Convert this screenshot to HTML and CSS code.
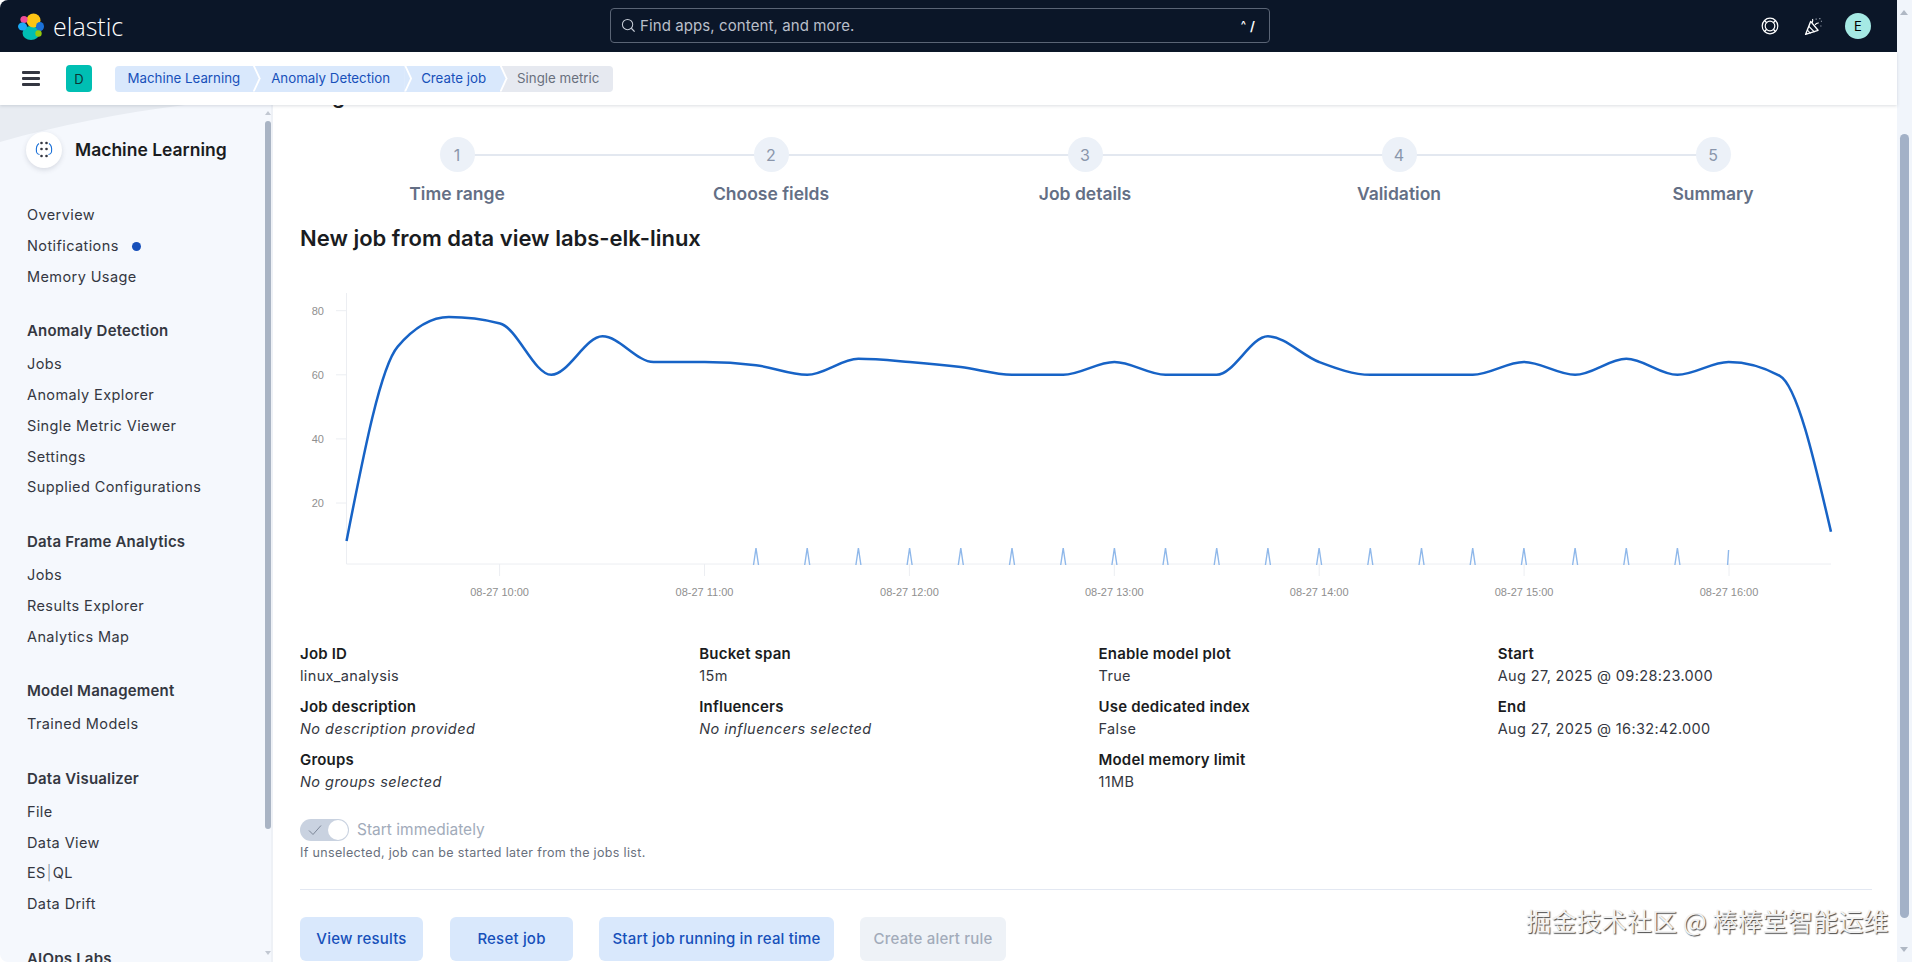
FILE: index.html
```html
<!DOCTYPE html>
<html lang="en">
<head>
<meta charset="utf-8">
<title>Create job - Single metric</title>
<link rel="stylesheet" href="styles.css">
</head>
<body>
<div class="app">
  <div class="column">
    <header class="topbar">
      <div class="brand">
        <svg class="brand-logo" viewBox="0 0 26 27" width="26" height="27">
          <ellipse cx="13" cy="20" rx="8.500" ry="7" fill="#00bfb3"/>
          <circle cx="15.500" cy="7.500" r="7" fill="#fec514"/>
          <circle cx="6" cy="6.500" r="3.600" fill="#f04e98"/>
          <ellipse cx="4.500" cy="13.500" rx="4.500" ry="4" fill="#1ba9f5"/>
          <ellipse cx="22" cy="13.500" rx="4" ry="4.500" fill="#1b71d8"/>
          <circle cx="20.500" cy="20.500" r="3.200" fill="#93c90e"/>
        </svg>
        <span class="brand-name">elastic</span>
      </div>
      <div class="search">
        <svg class="search-icon" viewBox="0 0 16 16" width="15" height="15">
          <circle cx="7" cy="7" r="5.500" fill="none" stroke="#c6ccd6" stroke-width="1.100"/>
          <path d="M11 11l3.500 3.500" stroke="#c6ccd6" stroke-width="1.400"/>
        </svg>
        <span class="search-text">Find apps, content, and more.</span>
        <span class="search-key"><span class="search-caret">^</span>/</span>
      </div>
      <div class="top-actions">
        <svg viewBox="0 0 18 18" width="18" height="18" class="top-icon">
          <circle cx="9" cy="9" r="7.800" fill="none" stroke="#fff" stroke-width="1.200"/>
          <circle cx="9" cy="9" r="4.800" fill="none" stroke="#fff" stroke-width="1.200"/>
          <path d="M3.500 3.500l2.200 2.200M14.500 3.500l-2.200 2.200M3.500 14.500l2.200-2.200M14.500 14.500l-2.200-2.200" stroke="#fff" stroke-width="1.400"/>
        </svg>
        <svg viewBox="0 0 18 18" width="19" height="19" class="top-icon">
          <path d="M1.500 16.500L6.300 4.200l7 8.400z" fill="none" stroke="#fff" stroke-width="1.300" stroke-linejoin="round"/>
          <path d="M4.600 8.800l5.400 5.600M3.200 12.500l3 3M7.500 5.500c1-1.500 1-2.500.6-3.600M10.500 7.500c1-1.600 2.200-2 3.500-1.800" fill="none" stroke="#fff" stroke-width="1.100"/>
          <path d="M11 2h1M14.500 1.500h1M16 4h1M15.500 8.500h1" stroke="#aab2bf" stroke-width="1.100"/>
        </svg>
        <span class="user-avatar">E</span>
      </div>
    </header>

    <div class="subbar">
      <div class="burger"><span></span><span></span><span></span></div>
      <span class="space-badge">D</span>
      <nav class="crumbs">
        <span class="crumb crumb-first">Machine Learning</span>
        <span class="crumb crumb-second">Anomaly Detection</span>
        <span class="crumb crumb-third">Create job</span>
        <span class="crumb crumb-last">Single metric</span>
      </nav>
    </div>

    <div class="workspace">
      <aside class="sidebar">
        <svg class="swoosh" viewBox="0 0 265 40" width="265" height="40" preserveAspectRatio="none">
          <path d="M0 0H185C120 8 60 20 0 37z" fill="#e8ecf2"/>
        </svg>
        <div class="side-scroll">
          <div class="side-arrow side-arrow-up"></div>
          <div class="side-thumb"></div>
          <div class="side-arrow side-arrow-down"></div>
        </div>
        <div class="side-title">
          <span class="side-logo">
            <svg viewBox="0 0 20 20" width="20" height="20">
              <g fill="#343741">
                <circle cx="7.500" cy="3" r="1.300"/><circle cx="12.500" cy="3" r="1.300"/>
                <circle cx="7.500" cy="9" r="1.300"/><circle cx="12.500" cy="9" r="1.300"/>
                <circle cx="7.500" cy="16" r="1.300"/><circle cx="12.500" cy="16" r="1.300"/>
              </g>
              <path d="M5 3.500C2.500 5 2 8 2.500 12c.3 1.500 1.500 2.300 3 2.500M15 3.500c2.500 1.500 3 4.500 2.500 8.500-.3 1.500-1.500 2.300-3 2.500" fill="none" stroke="#1b71d8" stroke-width="1.100"/>
            </svg>
          </span>
          <span class="side-name">Machine Learning</span>
        </div>
        <div class="side-nav">
          <div class="side-group">
            <a class="side-link">Overview</a>
            <a class="side-link">Notifications<span class="notify-dot"></span></a>
            <a class="side-link">Memory Usage</a>
          </div>
          <div class="side-group">
            <h3 class="side-head">Anomaly Detection</h3>
            <a class="side-link">Jobs</a>
            <a class="side-link">Anomaly Explorer</a>
            <a class="side-link">Single Metric Viewer</a>
            <a class="side-link">Settings</a>
            <a class="side-link">Supplied Configurations</a>
          </div>
          <div class="side-group">
            <h3 class="side-head">Data Frame Analytics</h3>
            <a class="side-link">Jobs</a>
            <a class="side-link">Results Explorer</a>
            <a class="side-link">Analytics Map</a>
          </div>
          <div class="side-group">
            <h3 class="side-head">Model Management</h3>
            <a class="side-link">Trained Models</a>
          </div>
          <div class="side-group">
            <h3 class="side-head">Data Visualizer</h3>
            <a class="side-link">File</a>
            <a class="side-link">Data View</a>
            <a class="side-link">ES<span class="pipe">|</span>QL</a>
            <a class="side-link">Data Drift</a>
          </div>
          <div class="side-group">
            <h3 class="side-head">AIOps Labs</h3>
          </div>
        </div>
      </aside>

      <main class="content">
        <h1 class="page-title">Single metric</h1>
        <ol class="stepper">
          <li class="step"><span class="step-num">1</span><span class="step-title">Time range</span></li>
          <li class="step"><span class="step-num">2</span><span class="step-title">Choose fields</span></li>
          <li class="step"><span class="step-num">3</span><span class="step-title">Job details</span></li>
          <li class="step"><span class="step-num">4</span><span class="step-title">Validation</span></li>
          <li class="step"><span class="step-num">5</span><span class="step-title">Summary</span></li>
        </ol>
        <h2 class="job-heading">New job from data view labs-elk-linux</h2>

        <svg class="chart" viewBox="0 0 1572 320" width="1572" height="320">
          <g class="grid-lines">
            <path d="M46.500 13V284M36 30.700H46.500M36 94.800H46.500M36 158.900H46.500M36 223H46.500"/>
            <path d="M46.500 284H1531"/>
            <path d="M199.600 284V296M404.500 284V296M609.400 284V296M814.300 284V296M1019.200 284V296M1224.100 284V296M1429 284V296"/>
          </g>
          <g class="y-labels">
            <text x="24" y="34.500">80</text>
            <text x="24" y="98.500">60</text>
            <text x="24" y="163">40</text>
            <text x="24" y="227">20</text>
          </g>
          <g class="x-labels">
            <text x="199.600" y="316">08-27 10:00</text>
            <text x="404.500" y="316">08-27 11:00</text>
            <text x="609.400" y="316">08-27 12:00</text>
            <text x="814.300" y="316">08-27 13:00</text>
            <text x="1019.200" y="316">08-27 14:00</text>
            <text x="1224.100" y="316">08-27 15:00</text>
            <text x="1429" y="316">08-27 16:00</text>
          </g>
          <path class="spikes" d="M453.500 285L456 268L458.500 285M504.700 285L507.200 268L509.700 285M555.900 285L558.400 268L560.900 285M607.100 285L609.600 268L612.100 285M658.300 285L660.800 268L663.300 285M709.500 285L712 268L714.500 285M760.700 285L763.200 268L765.700 285M811.900 285L814.400 268L816.900 285M863 285L865.500 268L868 285M914.200 285L916.700 268L919.200 285M965.400 285L967.900 268L970.400 285M1016.600 285L1019.100 268L1021.600 285M1067.800 285L1070.300 268L1072.800 285M1119 285L1121.500 268L1124 285M1170.200 285L1172.700 268L1175.200 285M1221.400 285L1223.900 268L1226.400 285M1272.600 285L1275.100 268L1277.600 285M1323.800 285L1326.300 268L1328.800 285M1374.900 285L1377.400 268L1379.900 285M1427.600 285L1428.600 270"/>
          <path class="series" d="M46.500 261.100C63.600 173.700 80.600 86.300 97.700 66.600C114.800 46.900 131.800 37.100 148.900 37.100C166 37.100 183 39.200 200.100 43.500C217.200 47.800 234.200 94.800 251.300 94.800C268.400 94.800 285.400 56.300 302.500 56.300C319.600 56.300 336.500 82 353.600 82C370.700 82 387.700 82 404.800 82C421.900 82 438.900 83.100 456 85.200C473.100 87.300 490.100 94.800 507.200 94.800C524.300 94.800 541.300 78.800 558.400 78.800C575.500 78.800 592.500 80.600 609.600 82C626.700 83.400 643.700 85 660.800 87.100C677.900 89.200 694.900 94.800 712 94.800L763.200 94.800C780.300 94.800 797.300 82 814.400 82C831.500 82 848.400 94.800 865.500 94.800L916.700 94.800C933.800 94.800 950.800 56.300 967.900 56.300C985 56.300 1002 75.600 1019.100 82C1036.200 88.400 1053.200 94.800 1070.300 94.800L1172.700 94.800C1189.800 94.800 1206.800 82 1223.900 82C1241 82 1258 94.800 1275.100 94.800C1292.200 94.800 1309.200 78.800 1326.300 78.800C1343.400 78.800 1360.300 94.800 1377.400 94.800C1394.500 94.800 1411.500 82 1428.600 82C1445.700 82 1462.700 86.600 1479.800 95.800C1496.900 105 1513.900 178.400 1531 251.800"/>
        </svg>

        <div class="details">
          <div class="detail-col">
            <dl class="field"><dt>Job ID</dt><dd>linux_analysis</dd></dl>
            <dl class="field"><dt>Job description</dt><dd class="empty">No description provided</dd></dl>
            <dl class="field"><dt>Groups</dt><dd class="empty">No groups selected</dd></dl>
          </div>
          <div class="detail-col">
            <dl class="field"><dt>Bucket span</dt><dd>15m</dd></dl>
            <dl class="field"><dt>Influencers</dt><dd class="empty">No influencers selected</dd></dl>
          </div>
          <div class="detail-col">
            <dl class="field"><dt>Enable model plot</dt><dd>True</dd></dl>
            <dl class="field"><dt>Use dedicated index</dt><dd>False</dd></dl>
            <dl class="field"><dt>Model memory limit</dt><dd>11MB</dd></dl>
          </div>
          <div class="detail-col">
            <dl class="field"><dt>Start</dt><dd>Aug 27, 2025 @ 09:28:23.000</dd></dl>
            <dl class="field"><dt>End</dt><dd>Aug 27, 2025 @ 16:32:42.000</dd></dl>
          </div>
        </div>

        <div class="switch-row">
          <span class="switch">
            <svg viewBox="0 0 16 16" width="16" height="16" class="switch-check"><path d="M2 8.500l4 4L14 3.500" fill="none" stroke="#7d8798" stroke-width="1"/></svg>
            <span class="switch-thumb"></span>
          </span>
          <span class="switch-label">Start immediately</span>
        </div>
        <p class="help">If unselected, job can be started later from the jobs list.</p>
        <hr class="rule">
        <div class="actions">
          <button class="btn btn-results">View results</button>
          <button class="btn btn-reset">Reset job</button>
          <button class="btn btn-realtime">Start job running in real time</button>
          <button class="btn btn-alert">Create alert rule</button>
        </div>
      </main>
    </div>
  </div>

  <div class="page-scroll">
    <div class="page-arrow page-arrow-up"></div>
    <div class="page-thumb"></div>
    <div class="page-arrow page-arrow-down"></div>
  </div>
</div>
<div class="watermark">掘金技术社区 @ 棒棒堂智能运维</div>
</body>
</html>
```

FILE: styles.css
```css
* { box-sizing: border-box; }
html, body { margin: 0; height: 100%; overflow: hidden; }
body { font-family: Inter, "Noto Sans", sans-serif; background: #fff; color: #343741; position: relative; }
h1, h2, h3, p, ol, dl, dd { margin: 0; padding: 0; }

.app { display: flex; height: 962px; }
.column { flex: 1; min-width: 0; display: flex; flex-direction: column; }

.topbar { height: 52px; flex: none; background: #0b1628; display: flex; align-items: center; border-top-left-radius: 8px; }
.brand { width: 610px; flex: none; display: flex; align-items: center; padding-left: 18px; gap: 9px; }
.brand-logo { flex: none; }
.brand-name { color: #fff; font-family: "Open Sans", sans-serif; font-size: 25px; font-weight: 300; line-height: 30px; }
.search { width: 660px; height: 35px; flex: none; margin-top: -1px; border: 1px solid #5a6475; border-radius: 4px; display: flex; align-items: center; padding: 0 14px 0 10px; gap: 4px; }
.search-icon { flex: none; }
.search-text { flex: 1; color: #b9bfca; font-size: 15px; letter-spacing: .1px; }
.search-key { color: #fff; font-size: 13px; font-weight: 600; display: flex; gap: 4px; align-items: center; }
.search-caret { font-size: 11px; position: relative; top: -1px; }
.top-actions { flex: 1; display: flex; align-items: center; padding-left: 491px; }
.top-icon { flex: none; margin-right: 25px; }
.top-actions .top-icon:nth-child(2) { margin-right: 22px; }
.user-avatar { width: 26px; height: 26px; border-radius: 50%; background: #a5e9e4; color: #000; font-size: 13px; display: flex; align-items: center; justify-content: center; }

.subbar { height: 53px; flex: none; background: #fff; display: flex; align-items: center; padding-left: 22px; box-shadow: 0 1px 3px rgba(60, 70, 90, .18); position: relative; z-index: 2; }
.burger { width: 18px; display: flex; flex-direction: column; gap: 3.500px; flex: none; }
.burger span { height: 2.500px; background: #343741; border-radius: 1px; }
.space-badge { width: 26px; height: 27px; margin-left: 26px; background: #00bfb3; border-radius: 4px; color: #0c3533; font-size: 13px; display: flex; align-items: center; justify-content: center; flex: none; }
.crumbs { display: flex; margin-left: 22.500px; height: 26px; }
.crumb { position: relative; height: 26px; display: flex; align-items: center; padding-bottom: 1px; font-size: 13.300px; background: #d9e8fc; color: #1750ba; white-space: nowrap; }
.crumb::before { content: ""; position: absolute; top: 0; right: -8px; width: 8px; height: 100%; background: #fff; clip-path: polygon(0 0, 2px 0, 100% 50%, 2px 100%, 0 100%); z-index: 1; }
.crumb::after { content: ""; position: absolute; top: 0; right: -6px; width: 6px; height: 100%; background: #d9e8fc; clip-path: polygon(0 0, 100% 50%, 0 100%); z-index: 2; }
.crumb-first { padding-left: 13px; padding-right: 12.500px; border-radius: 4px 0 0 4px; }
.crumb-second { padding-left: 18.500px; padding-right: 14px; }
.crumb-third { padding-left: 17px; padding-right: 13.500px; }
.crumb-last { background: #e6e9f0; color: #69707d; padding-left: 17.500px; padding-right: 14px; border-radius: 0 4px 4px 0; }
.crumb-last::before, .crumb-last::after { display: none; }

.workspace { flex: 1; min-height: 0; display: flex; }
.sidebar { width: 273px; flex: none; background: #f5f8fd; position: relative; overflow: hidden; border-bottom-left-radius: 8px; box-shadow: inset -2px 0 0 #eef1f6; }
.swoosh { position: absolute; left: 0; top: 0; }
.side-scroll { position: absolute; right: 2px; top: 0; bottom: 0; width: 6px; }
.side-thumb { position: absolute; left: 0; right: 0; top: 16px; height: 708px; background: #a9b4c4; border-radius: 3px; }
.side-arrow { position: absolute; left: 0; border-left: 3px solid transparent; border-right: 3px solid transparent; }
.side-arrow-up { top: 6px; border-bottom: 4px solid #c2c8d2; }
.side-arrow-down { bottom: 7px; border-top: 4px solid #c2c8d2; }

.side-title { position: relative; display: flex; align-items: center; gap: 13px; padding: 27px 0 0 26px; }
.side-logo { width: 36px; height: 36px; background: #fff; border-radius: 50%; display: flex; align-items: center; justify-content: center; box-shadow: 0 2px 5px rgba(60, 70, 90, .16); flex: none; }
.side-name { font-size: 17.500px; font-weight: 600; color: #1a1c21; margin-bottom: 2px; }
.side-nav { position: relative; padding: 32px 0 0 27px; }
.side-group { margin-bottom: 24px; }
.side-head { font-size: 15px; font-weight: 600; letter-spacing: .2px; color: #343741; line-height: 30.800px; margin-bottom: 2px; }
.side-link { display: flex; align-items: center; font-size: 14.500px; line-height: 30.800px; letter-spacing: .4px; color: #343741; }
.notify-dot { width: 9px; height: 9px; margin-left: 13px; border-radius: 50%; background: #1750ba; }
.pipe { color: #7d8798; font-weight: 300; margin: 0 1px; }

.content { flex: 1; min-width: 0; overflow: hidden; padding: 0 25px 0 27px; background: #fff; }
.page-title { font-size: 21px; font-weight: 600; line-height: 26px; color: #1a1c21; margin-top: -22px; }
.stepper { list-style: none; display: grid; grid-template-columns: repeat(5, 314px); margin-top: 28px; }
.step { position: relative; display: flex; flex-direction: column; align-items: center; }
.step:not(:last-child)::after { content: ""; position: absolute; left: 50%; width: 100%; top: 17px; height: 2px; background: #e3e8f0; }
.step-num { position: relative; z-index: 1; width: 35px; height: 35px; border-radius: 50%; background: #ecf1f8; color: #8a96ab; font-size: 16px; display: flex; align-items: center; justify-content: center; }
.step-title { font-size: 17.500px; font-weight: 600; line-height: 24px; margin-top: 10px; color: #646f85; }
.job-heading { font-size: 22px; font-weight: 600; line-height: 30px; margin-top: 17px; color: #1a1c21; }

.chart { display: block; margin-top: 27px; }
.grid-lines path { fill: none; stroke: #eceef2; stroke-width: 1; }
.y-labels text { font-family: "Liberation Sans", sans-serif; font-size: 11px; fill: #8f8f8f; text-anchor: end; }
.x-labels text { font-family: "Liberation Sans", sans-serif; font-size: 11px; fill: #8f8f8f; text-anchor: middle; }
.spikes { fill: none; stroke: #8fb8ea; stroke-width: 1.400; }
.series { fill: none; stroke: #1763c6; stroke-width: 2.500; }

.details { display: grid; grid-template-columns: repeat(4, 1fr); column-gap: 25px; margin-top: 42.600px; }
.detail-col { display: flex; flex-direction: column; gap: 9px; }
.field dt { font-size: 15px; font-weight: 600; letter-spacing: .2px; line-height: 22px; color: #1a1c21; }
.field dd { font-size: 14.500px; line-height: 22px; color: #343741; letter-spacing: .35px; }
.field .empty { font-style: italic; letter-spacing: .45px; }

.switch-row { display: flex; align-items: center; gap: 8px; margin-top: 26.600px; }
.switch { position: relative; width: 49px; height: 22px; border-radius: 11px; background: #c9d2e0; flex: none; }
.switch-check { position: absolute; left: 7px; top: 3px; }
.switch-thumb { position: absolute; right: 1px; top: 1px; width: 20px; height: 20px; border-radius: 50%; background: #fff; }
.switch-label { font-size: 15.500px; color: #a2abba; padding-bottom: 2px; }
.help { font-size: 12.500px; line-height: 16px; margin-top: 4px; color: #69707d; letter-spacing: .34px; }
.rule { height: 1px; border: 0; margin: 28px 0 0; background: #e3e8f2; }
.actions { display: flex; margin-top: 27px; }
.btn { height: 44px; flex: none; border: 0; border-radius: 6px; background: #d9e8fc; color: #1750ba; font-family: Inter, sans-serif; font-size: 15px; font-weight: 500; letter-spacing: .2px; padding: 0 0 1px; }
.btn-results { width: 123px; }
.btn-reset { width: 123px; margin-left: 27px; }
.btn-realtime { width: 235px; margin-left: 26px; }
.btn-alert { width: 146px; margin-left: 26px; background: #eef2f7; color: #a2abba; }

.page-scroll { width: 15px; flex: none; background: #f1f5fb; position: relative; }
.page-thumb { position: absolute; left: 3px; width: 9px; top: 134px; height: 784px; background: #a3b1c7; border-radius: 5px; }
.page-arrow { position: absolute; left: 3px; border-left: 4.500px solid transparent; border-right: 4.500px solid transparent; }
.page-arrow-up { top: 10px; border-bottom: 5px solid #b0b8c4; }
.page-arrow-down { bottom: 10px; border-top: 5px solid #b0b8c4; }

.watermark { position: absolute; left: 1526px; top: 906px; font-family: "Noto Sans CJK SC", sans-serif; font-size: 25.200px; line-height: 28px; white-space: nowrap; color: #f2f2f2; text-shadow: 1px 1px 1px #4a4a4a; }
```
